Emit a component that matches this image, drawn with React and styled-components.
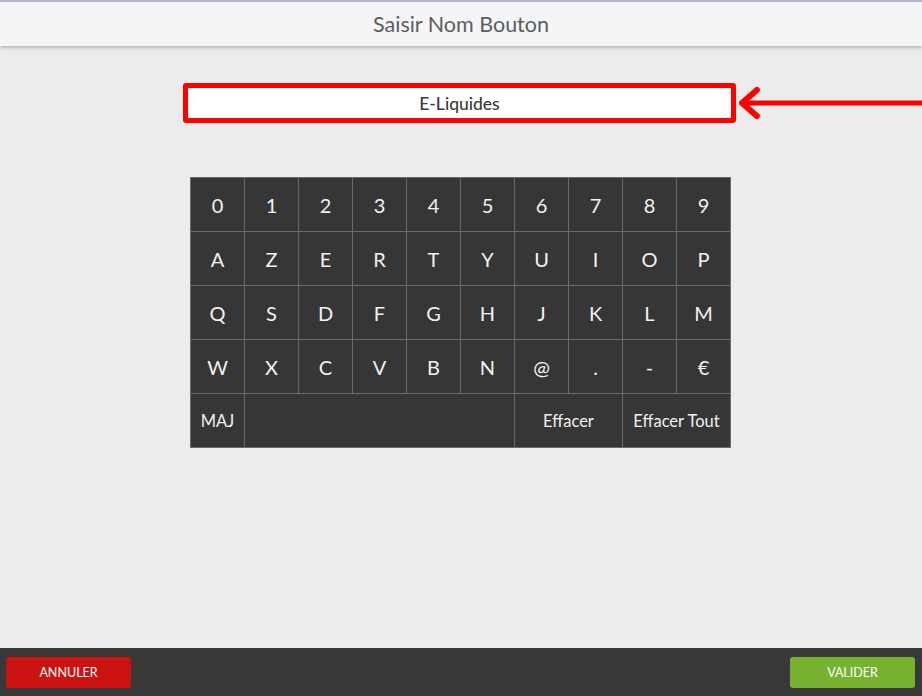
import React, { useState } from 'react';
import styled, { createGlobalStyle } from 'styled-components';

const GlobalStyle = createGlobalStyle`
    html, body {
        margin: 0;
        padding: 0;
        background: #ececec;
        font-family: Lato, "Open Sans", sans-serif;
    }
`;

const rows = [
    ['0', '1', '2', '3', '4', '5', '6', '7', '8', '9'],
    ['A', 'Z', 'E', 'R', 'T', 'Y', 'U', 'I', 'O', 'P'],
    ['Q', 'S', 'D', 'F', 'G', 'H', 'J', 'K', 'L', 'M'],
    ['W', 'X', 'C', 'V', 'B', 'N', '@', '.', '-', '€'],
];

function App() {
    const [value, setValue] = useState('E-Liquides');

    const press = (k) => setValue(v => v + k);

    return (
        <Page>
            <GlobalStyle />
            <Header>
                <HeaderTitle>Saisir Nom Bouton</HeaderTitle>
            </Header>

            <Content>
                <InputRow>
                    <Spacer />
                    <NameBox>{value}</NameBox>
                    <Arrow viewBox="0 0 186 40" preserveAspectRatio="none">
                        <path d="M4 20 H186" stroke="#ff0000" strokeWidth="5" fill="none" />
                        <path d="M20 7 L5 20 L20 33" stroke="#ff0000" strokeWidth="6" strokeLinecap="round" strokeLinejoin="round" fill="none" />
                    </Arrow>
                </InputRow>

                <Keyboard>
                    {rows.flat().map((k, i) => (
                        <Key key={i} onClick={() => press(k)}>{k}</Key>
                    ))}
                    <Key $small>MAJ</Key>
                    <Key $span={5} onClick={() => press(' ')} />
                    <Key $span={2} $small onClick={() => setValue(v => v.slice(0, -1))}>Effacer</Key>
                    <Key $span={2} $small onClick={() => setValue('')}>Effacer Tout</Key>
                </Keyboard>
            </Content>

            <Footer>
                <FooterBtn $color="#cc1111">ANNULER</FooterBtn>
                <FooterBtn $color="#76b22e">VALIDER</FooterBtn>
            </Footer>
        </Page>
    );
}

export default App;


const Page = styled.div`
    display: flex;
    flex-direction: column;
    height: 100vh;
    overflow: hidden;
`;

const Header = styled.div`
    height: 44px;
    border-top: 2px solid #b9b5c9;
    background: #f5f5f5;
    box-shadow: 0 2px 3px rgba(0, 0, 0, 0.22);
    display: flex;
    justify-content: center;
    align-items: center;
    position: relative;
    z-index: 1;
`;

const HeaderTitle = styled.h1`
    margin: 0;
    font-size: 21.5px;
    font-weight: 400;
    color: #5a5d62;
`;

const Content = styled.div`
    flex: 1;
    display: flex;
    flex-direction: column;
    align-items: center;
`;

const InputRow = styled.div`
    width: 100%;
    display: flex;
    align-items: center;
    margin-top: 37px;
`;

const Spacer = styled.div`
    width: 183px;
`;

const NameBox = styled.div`
    width: 543px;
    height: 30px;
    border: 5px solid #ff0000;
    border-radius: 3px;
    background: #ffffff;
    display: flex;
    justify-content: center;
    align-items: center;
    font-size: 17.5px;
    font-weight: 500;
    color: #3a3a3a;
`;

const Arrow = styled.svg`
    flex: 1;
    height: 40px;
    margin-left: 1px;
`;

const Keyboard = styled.div`
    margin-top: 54px;
    margin-right: 1px;
    display: grid;
    grid-template-columns: repeat(10, 53px);
    grid-auto-rows: 53px;
    gap: 1px;
    padding: 1px;
    background: #6b6b6b;
`;

const Key = styled.div`
    grid-column: span ${p => p.$span || 1};
    background: #363636;
    color: #f2f2f2;
    display: flex;
    justify-content: center;
    align-items: center;
    font-size: ${p => (p.$small ? '16.5px' : '20px')};
    cursor: pointer;
    user-select: none;
`;

const Footer = styled.div`
    height: 48px;
    background: #383838;
    display: flex;
    justify-content: space-between;
    align-items: center;
    padding: 0 7px 0 6px;
`;

const FooterBtn = styled.button`
    width: 125px;
    height: 31px;
    border: none;
    border-radius: 3px;
    background: ${p => p.$color};
    color: #ffffff;
    font-family: Lato, sans-serif;
    font-size: 12.5px;
    cursor: pointer;
`;
